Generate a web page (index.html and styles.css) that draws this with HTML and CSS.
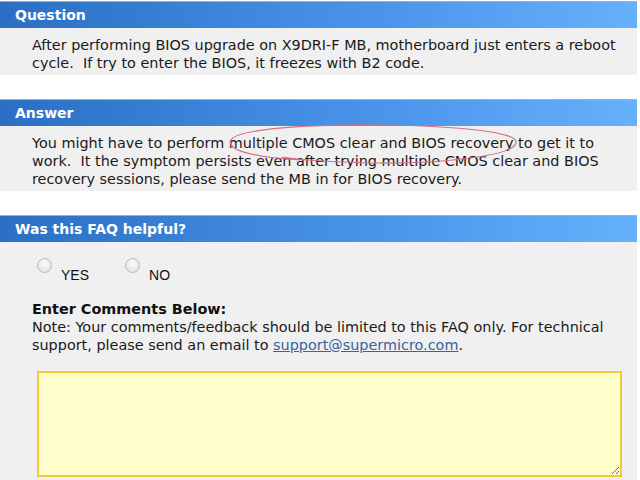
FILE: index.html
```html
<!DOCTYPE html>
<html lang="en">
<head>
    <meta charset="UTF-8">
    <title>FAQ</title>
    <link rel="stylesheet" href="styles.css">
</head>
<body>
    <div class="page">
        <div class="section">
            <div class="bar">Question</div>
            <div class="body">
                After performing BIOS upgrade on X9DRI-F MB, motherboard just enters a reboot<br>
                cycle.&nbsp; If try to enter the BIOS, it freezes with B2 code.
            </div>
        </div>

        <div class="section">
            <div class="bar">Answer</div>
            <div class="body">
                You might have to perform multiple CMOS clear and BIOS recovery to get it to<br>
                work.&nbsp; It the symptom persists even after trying multiple CMOS clear and BIOS<br>
                recovery sessions, please send the MB in for BIOS recovery.
            </div>
        </div>

        <div class="section helpful">
            <div class="bar">Was this FAQ helpful?</div>
            <div class="body">
                <div class="vote">
                    <label class="choice"><span class="radio"></span><span class="choice-text">YES</span></label>
                    <label class="choice"><span class="radio"></span><span class="choice-text">NO</span></label>
                </div>
                <div class="comments-title">Enter Comments Below:</div>
                <div class="note">
                    Note: Your comments/feedback should be limited to this FAQ only. For technical<br>
                    support, please send an email to <a href="#">support@supermicro.com</a>.
                </div>
                <textarea class="comments"></textarea>
            </div>
        </div>

        <!-- hand drawn mark over the answer -->
        <svg class="scribble" width="640" height="480" viewBox="0 0 640 480">
            <path d="M 300 160 C 252 157, 226 150, 231 140 C 237 128, 320 124, 380 125 C 460 126, 519 132, 516 143 C 513 156, 440 164, 372 163 C 330 162, 300 160, 282 157" fill="none" stroke="#d7707e" stroke-width="1.2"/>
        </svg>
    </div>
</body>
</html>
```

FILE: styles.css
```css
body {
    margin: 0;
    padding: 0;
    background-color: #ffffff;
    font-family: "DejaVu Sans", Verdana, sans-serif;
    overflow: hidden;
}
.page {
    position: relative;
    width: 637px;
    height: 480px;
    padding-top: 1px;
    box-sizing: border-box;
}
.section {
    margin-bottom: 24px;
}
.bar {
    height: 27px;
    line-height: 26px;
    padding-left: 15px;
    color: #ffffff;
    font-weight: bold;
    font-size: 14px;
    background: linear-gradient(to right, #2a6fc4, #4a95ea 60%, #66b1fc);
    border-top: 1px solid #7fb6ee;
    box-sizing: border-box;
}
.body {
    background-color: #f0f0f0;
    color: #1a1a1a;
    font-size: 14.4px;
    line-height: 18px;
    padding: 8px 10px 3px 32px;
}
.helpful {
    margin-bottom: 0;
}
.helpful .body {
    padding-bottom: 10px;
}
.vote {
    display: flex;
    gap: 36px;
    padding-left: 5px;
    margin-top: 7px;
    height: 36px;
}
.choice {
    display: flex;
    align-items: flex-start;
    gap: 9px;
}
.radio {
    width: 15px;
    height: 15px;
    border-radius: 50%;
    border: 1px solid #b9b9b9;
    background: radial-gradient(circle at 50% 35%, #fbfbfb, #dcdcdc);
    box-sizing: border-box;
    margin-top: 1px;
}
.choice-text {
    font-family: "Liberation Sans", Arial, sans-serif;
    font-size: 14px;
    color: #111111;
    margin-top: 9px;
}
.comments-title {
    font-weight: bold;
    color: #111111;
    margin-top: 7px;
}
.note a {
    color: #3a62a0;
}
.comments {
    display: block;
    width: 585px;
    height: 106px;
    margin: 17px 0 0 5px;
    background-color: #ffffcc;
    border: 2px solid #f5c836;
    box-sizing: border-box;
}
.scribble {
    position: absolute;
    left: 0;
    top: 0;
    pointer-events: none;
}
```
